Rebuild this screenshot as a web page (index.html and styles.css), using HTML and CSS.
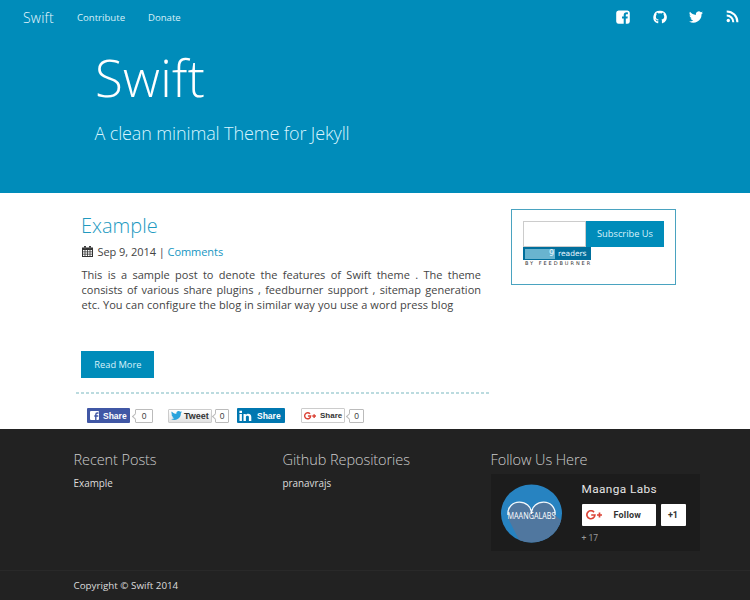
FILE: index.html
```html
<!DOCTYPE html>
<html lang="en">
<head>
<meta charset="utf-8">
<title>Swift</title>
<link rel="stylesheet" href="styles.css">
</head>
<body>
<header class="hero">
  <nav class="nav">
    <a class="brand">Swift</a>
    <a class="nav-link contribute">Contribute</a>
    <a class="nav-link donate">Donate</a>
    <div class="social">
      <svg viewBox="0 0 14 14" width="14" height="14"><path fill="#fff" d="M2.500.5h9a2.500 2.500 0 0 1 2.300 2.300v8.600a2.500 2.500 0 0 1-2.300 2.300h-1.700V8.600h1.700l.3-2.100h-2V5.300c0-.7.2-1 1-1h1.100V2.400c-2.800-.4-4.200.5-4.200 2.600v1.500H6v2.100h1.700v5.100H2.500A2.500 2.500 0 0 1 .2 11.400V2.800A2.500 2.500 0 0 1 2.500.5z"/></svg>
      <svg viewBox="0 0 16 16" width="14" height="14"><path fill="#fff" d="M8 .8a7.400 7.400 0 0 0-2.600 14.400c.4.100.6-.1.600-.4v-2.100c-1.800.3-2.300-.5-2.600-1.100l-.8-1c.9-.1 1.300.4 1.600.9.500.7 1.200.6 1.800.4.100-.5.300-.8.500-1C4.600 10.600 3.300 9.900 3.300 7.300c0-.8.300-1.500.8-2-.1-.4-.3-1.100.1-2.100 0 0 .7-.2 2.200.8a7 7 0 0 1 3.400 0c1.400-1 2.100-.8 2.100-.8.400 1 .2 1.700.1 2.100.5.500.8 1.200.8 2 0 2.600-1.400 3.300-3.200 3.600.4.300.6.900.6 1.600v2.300c0 .3.200.5.600.4A7.400 7.400 0 0 0 8 .8z"/></svg>
      <svg viewBox="0 0 24 24" width="14" height="14"><path fill="#fff" d="M24 4.600c-.9.400-1.800.7-2.800.8 1-.6 1.800-1.600 2.200-2.700-1 .6-2 1-3.100 1.200a4.900 4.900 0 0 0-8.400 4.500C7.800 8.200 4.200 6.200 1.700 3.200a4.900 4.900 0 0 0 1.500 6.500c-.8 0-1.600-.2-2.200-.6v.1c0 2.400 1.700 4.400 3.900 4.800-.7.200-1.500.2-2.200.1.600 2 2.400 3.400 4.600 3.400A9.900 9.900 0 0 1 0 19.500 14 14 0 0 0 21.500 7.100c1-.7 1.800-1.600 2.500-2.500z"/></svg>
      <svg viewBox="0 0 13 13" width="13" height="13"><circle cx="2.300" cy="10.500" r="1.700" fill="#fff"/><path fill="none" stroke="#fff" stroke-width="2" d="M.7 5.500c3.700 0 6.600 2.900 6.600 6.700M.7 1.400c6 0 10.700 4.700 10.700 10.800"/></svg>
    </div>
  </nav>
  <h1>Swift</h1>
  <p class="tagline">A clean minimal Theme for Jekyll</p>
</header>

<main class="main">
  <article class="post">
    <h2>Example</h2>
    <div class="meta">
      <svg viewBox="0 0 11 11" width="11" height="11"><path fill="#333" d="M0 1.500h11V11H0zM2 0h2v2H2zM7 0h2v2H7z"/><path fill="#fff" d="M1 4h1.600v1.500H1zM3.400 4h1.700v1.500H3.400zM5.900 4h1.700v1.500H5.900zM8.400 4H10v1.500H8.400zM1 6.200h1.600v1.500H1zM3.400 6.200h1.700v1.500H3.400zM5.900 6.200h1.700v1.500H5.900zM8.400 6.200H10v1.500H8.400zM1 8.400h1.600v1.500H1zM3.400 8.400h1.700v1.500H3.400zM5.900 8.400h1.700v1.500H5.900zM8.400 8.400H10v1.500H8.400zM2.800.8h.4v1.700h-.4zM7.800.8h.4v1.700h-.4z"/></svg>
      <span class="date">Sep 9, 2014 | <a>Comments</a></span>
    </div>
    <div class="excerpt">
      <div class="line">This is a sample post to denote the features of Swift theme . The theme</div>
      <div class="line">consists of various share plugins , feedburner support , sitemap generation</div>
      <div class="line last">etc. You can configure the blog in similar way you use a word press blog</div>
    </div>
    <a class="read-more">Read More</a>
    <svg class="divider" width="413" height="2"><path d="M0 1h413" stroke="#79b7c0" stroke-width="1.200" stroke-dasharray="3 2"/></svg>
    <div class="shares">
      <a class="share fb"><svg viewBox="0 0 9 9" width="9" height="9"><rect width="9" height="9" rx="1" fill="#fff"/><path d="M8.500 2H7.400C6.200 2 5.800 2.600 5.800 3.700V9M4.300 5h4" fill="none" stroke="#4057a5" stroke-width="1.400"/></svg><b>Share</b></a>
      <span class="count c1">0</span>
      <a class="share tw"><svg viewBox="0 0 24 24" width="11" height="11"><path fill="#29a3dc" d="M24 4.600c-.9.400-1.800.7-2.800.8 1-.6 1.800-1.600 2.200-2.700-1 .6-2 1-3.100 1.200a4.900 4.900 0 0 0-8.400 4.500C7.800 8.200 4.200 6.200 1.700 3.200a4.900 4.900 0 0 0 1.500 6.500c-.8 0-1.600-.2-2.200-.6v.1c0 2.400 1.700 4.400 3.900 4.800-.7.200-1.500.2-2.200.1.600 2 2.400 3.400 4.600 3.400A9.900 9.900 0 0 1 0 19.500 14 14 0 0 0 21.500 7.100c1-.7 1.800-1.600 2.500-2.500z"/></svg><b>Tweet</b></a>
      <span class="count c2">0</span>
      <a class="share li"><svg viewBox="0 0 13 12" width="13" height="12"><path fill="#fff" d="M.5 4h2.400v7H.5zM.4.800h2.600v2.100H.4zM4.500 4h2.300v1C8 3.300 12.300 3.200 12.300 7v4H9.900V7.200c0-2-3-1.900-3 0V11H4.500z"/></svg><b>Share</b></a>
      <a class="share gp"><svg viewBox="0 0 16 10" width="12" height="8"><path d="M8 2.200A4 4 0 1 0 8.900 5H5.200M11 5h5M13.500 2.500v5" fill="none" stroke="#db4437" stroke-width="1.900"/></svg><b>Share</b></a>
      <span class="count c3">0</span>
    </div>
  </article>
  <aside class="subscribe">
    <div class="form"><input class="email" type="text" aria-label="Email"><a class="sub-btn">Subscribe Us</a></div>
    <div class="feed"><span class="num">9</span><span class="readers">readers</span></div>
    <div class="by">BY FEEDBURNER</div>
  </aside>
</main>

<footer class="footer">
  <div class="cols">
    <section><h3>Recent Posts</h3><p>Example</p></section>
    <section><h3>Github Repositories</h3><p>pranavrajs</p></section>
    <section><h3>Follow Us Here</h3>
      <div class="card">
        <svg class="avatar" viewBox="0 0 62 60" width="62" height="60">
          <defs><clipPath id="disc"><ellipse cx="30.500" cy="29.500" rx="30.500" ry="29"/></clipPath></defs>
          <g clip-path="url(#disc)"><rect width="62" height="60" fill="#2783c1"/>
          <path fill="#50779f" d="M7 31C7 14 30.500 14 30.500 30C30.500 14 54 14 54 31L62 38V60H20L7 34z"/></g>
          <path fill="none" stroke="#f2f8fc" stroke-width="1.300" d="M7 31C5.500 14 30.500 14 30.500 30C30.500 14 55.500 14 54 31"/>
          <text x="6.500" y="34.500" textLength="48" lengthAdjust="spacingAndGlyphs" class="logo-text">MAANGALABS</text>
        </svg>
        <div class="info">
          <div class="name">Maanga Labs</div>
          <div class="actions">
            <a class="follow"><svg viewBox="0 0 16 10" width="16" height="10"><path d="M8 2.200A4 4 0 1 0 8.900 5H5.200M11 5h5M13.500 2.500v5" fill="none" stroke="#db4437" stroke-width="1.700"/></svg><b>Follow</b></a>
            <a class="plus">+1</a>
          </div>
          <div class="fans">+ 17</div>
        </div>
      </div>
    </section>
  </div>
  <div class="copyright"><span>Copyright © Swift 2014</span></div>
</footer>
</body>
</html>
```
FILE: styles.css
```css
* { box-sizing: border-box; }
body { margin: 0; width: 750px; height: 600px; overflow: hidden; background: #fff; color: #444; font-family: "Open Sans", sans-serif; font-size: 11px; }
h1, h2, h3, p { margin: 0; font-weight: 300; }
svg { display: block; flex: none; }
a, span, b, h1, h2, h3, p { white-space: nowrap; }

.hero { height: 193px; background: #008cba; color: #fff; }
.nav { display: flex; align-items: center; height: 34px; padding: 0 11.500px 0 23px; }
.brand { width: 54px; font-size: 14px; font-weight: 300; letter-spacing: .2px; color: #e8f7ff; }
.nav-link { font-size: 9.600px; width: 71px; color: #d9f0f8; }
.social { display: flex; align-items: center; gap: 22.500px; margin: -1px 0 0 auto; }
.hero h1 { padding: 8px 0 0 95px; font-size: 51px; line-height: 70px; letter-spacing: .3px; }
.tagline { padding: 9px 0 0 94.500px; font-size: 18px; line-height: 24px; letter-spacing: -.13px; color: #d9f5ff; }

.main { display: flex; height: 236px; padding: 15px 0 0 76px; }
.post { width: 413px; margin-right: 22px; }
.post h2 { padding-left: 5px; font-size: 20px; line-height: 35px; color: #2199bf; }
.meta { display: flex; align-items: center; height: 17px; padding-left: 5.500px; gap: 5px; font-size: 11px; color: #444; }
.date { letter-spacing: -.05px; }
.meta a { color: #1596c2; }
.excerpt { padding: 7px 8px 0 5.500px; font-size: 11px; line-height: 15px; }
.line { text-align: justify; text-align-last: justify; }
.line.last { text-align-last: left; white-space: nowrap; letter-spacing: .07px; }
.read-more { display: block; width: 73px; height: 27px; margin: 39px 0 0 5.400px; background: #008cba; color: #d9f2fa; font-size: 9.300px; line-height: 27px; text-align: center; }
.divider { margin-top: 14px; }
.shares { display: flex; align-items: center; height: 15px; margin: 14px 0 0 11px; }
.share { display: flex; align-items: center; height: 15px; border-radius: 1px; font: bold 8.500px "Liberation Sans", sans-serif; }
.fb { width: 43px; padding-left: 3px; gap: 4px; background: #4057a5; color: #fff; }
.tw { width: 44px; height: 14px; padding-left: 2px; gap: 2px; margin-left: 15px; background: linear-gradient(#fff, #e2e2e2); border: 1px solid #ccc; color: #333; font-size: 9px; }
.li { width: 48px; padding-left: 2px; gap: 5px; margin-left: 8px; background: #0077b0; color: #fff; }
.gp { width: 44px; padding-left: 2px; gap: 4px; margin-left: 16px; border: 1px solid #ccc; color: #333; font-size: 8px; }
.count { position: relative; height: 14px; border: 1px solid #bbb; border-radius: 1px; background: #fff; font: 8.500px/12px "Liberation Sans", sans-serif; text-align: center; }
.count::before { content: ""; position: absolute; left: -3px; top: 4px; width: 4px; height: 4px; background: #fff; border: solid #bbb; border-width: 0 0 1px 1px; transform: rotate(45deg); }
.c1 { width: 18px; margin-left: 5px; }
.c2 { width: 14px; margin-left: 3px; }
.c3 { width: 15px; margin-left: 4px; }

.subscribe { width: 165px; height: 76px; margin-top: 1px; padding: 11px; border: 1px solid #4aa3c0; }
.form { display: flex; height: 26px; }
.email { width: 63px; height: 26px; padding: 0; border: 1px solid #ccc; border-radius: 0; background: #fff; }
.sub-btn { width: 78px; background: #008cba; color: #d9f2fa; font-size: 9.300px; line-height: 26px; text-align: center; }
.feed { display: flex; align-items: center; width: 68px; height: 13px; padding: 0 2px; background: #006f9c; color: #e8f8ff; font: 8px "DejaVu Sans", sans-serif; }
.num { width: 30px; height: 10px; background: #69b4cf; line-height: 10px; text-align: right; padding-right: 1px; }
.readers { padding-left: 3px; font-size: 7.500px; }
.by { height: 6px; padding-left: 2px; color: #333; font: 5px/6px "DejaVu Sans", sans-serif; letter-spacing: 1.950px; white-space: nowrap; }

.footer { height: 171px; background: #222; color: #ddd; }
.cols { display: grid; grid-template-columns: 209px 208px 210px; height: 142px; padding: 20px 0 0 73.500px; border-bottom: 1px solid #292929; }
.cols h3 { font-size: 14.500px; line-height: 21px; letter-spacing: -.08px; color: #ccc; }
.cols p { padding-top: 5px; font-size: 9.900px; line-height: 16px; font-weight: 400; }
.card { display: flex; width: 209px; height: 77px; margin-top: 4px; background: #1c1c1c; font-family: Roboto, sans-serif; }
.avatar { margin: 10px 19px 0 10px; }
.logo-text { fill: #fff; font: 8.500px "Open Sans", sans-serif; }
.info { padding-top: 8px; }
.name { font-size: 11.800px; line-height: 15px; letter-spacing: .4px; color: #e5e5e5; }
.actions { display: flex; gap: 5px; margin-top: 7px; }
.follow, .plus { display: flex; align-items: center; height: 22px; background: #fff; border-radius: 1px; color: #333; font-size: 9px; }
.follow { width: 74px; padding-left: 4px; gap: 12px; }
.follow b { font-weight: 700; letter-spacing: .2px; }
.plus { width: 25px; justify-content: center; font-weight: 700; }
.fans { padding-top: 7px; font-size: 8.500px; line-height: 11px; color: #999; }
.copyright { height: 29px; padding-left: 73.500px; font-size: 9.800px; line-height: 29px; color: #ddd; }
```
